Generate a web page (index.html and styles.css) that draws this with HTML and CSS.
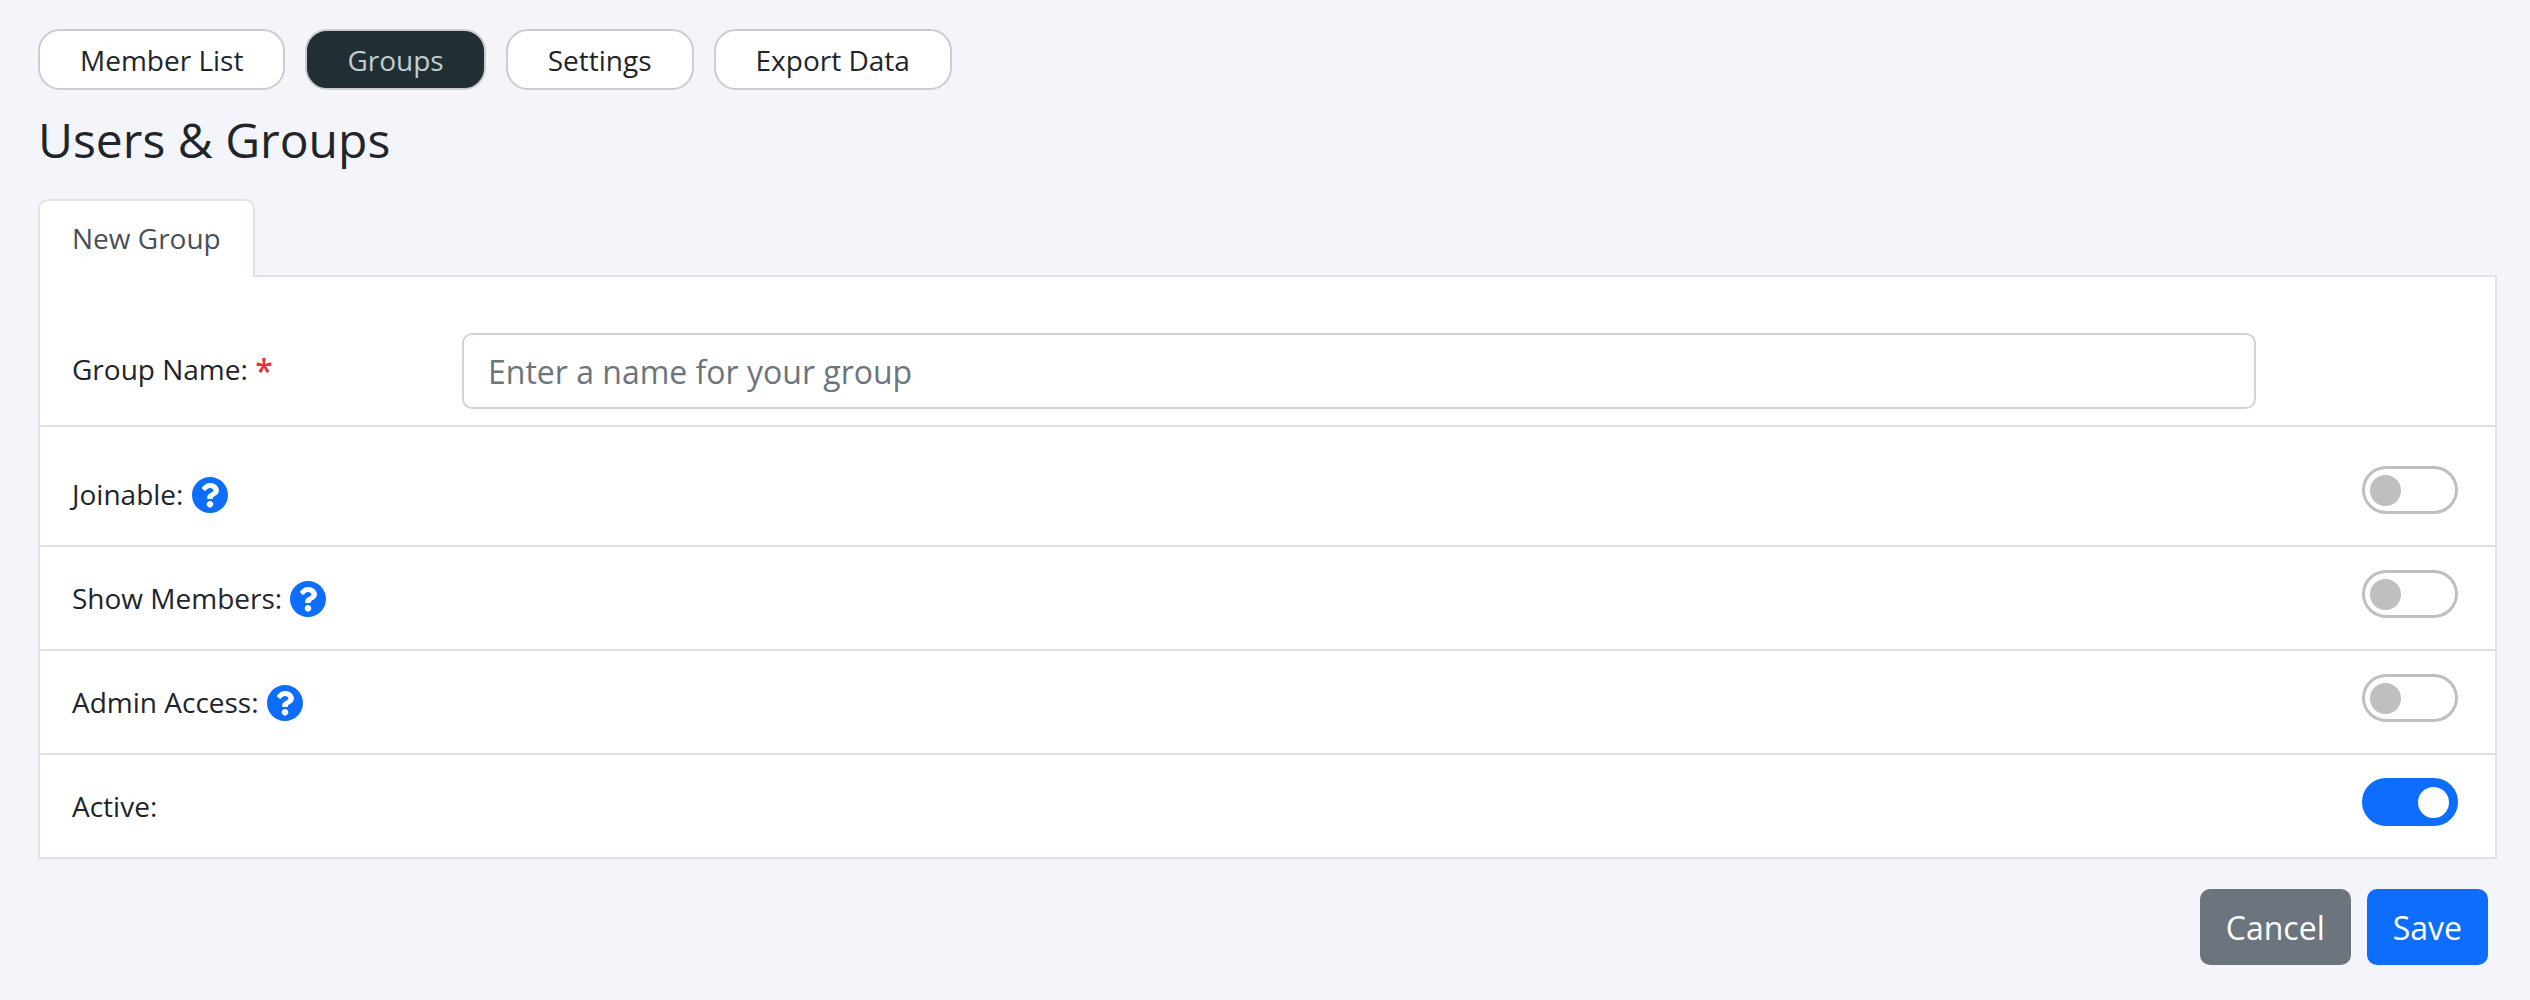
FILE: index.html
```html
<!DOCTYPE html>
<html lang="en">
<head>
<meta charset="utf-8">
<title>Users &amp; Groups</title>
<link rel="stylesheet" href="styles.css">
</head>
<body>
<svg class="defs" width="0" height="0" aria-hidden="true"><symbol id="q" viewBox="8 8 496 496"><path d="M504 256c0 136.997-111.043 248-248 248S8 392.997 8 256C8 119.083 119.043 8 256 8s248 111.083 248 248zM262.655 90c-54.497 0-89.255 22.957-116.549 63.758-3.536 5.286-2.353 12.415 2.715 16.258l34.699 26.31c5.205 3.947 12.621 3.008 16.665-2.122 17.864-22.658 30.113-35.797 57.303-35.797 20.429 0 45.698 13.148 45.698 32.958 0 14.976-12.363 22.667-32.534 33.976C247.128 238.528 216 254.941 216 296v4c0 6.627 5.373 12 12 12h56c6.627 0 12-5.373 12-12v-1.333c0-28.462 83.186-29.647 83.186-106.667 0-58.002-60.165-102-116.531-102zM256 338c-25.365 0-46 20.635-46 46 0 25.364 20.635 46 46 46s46-20.636 46-46c0-25.365-20.635-46-46-46z"/></symbol></svg>
<nav class="nav">
  <a class="pill">Member List</a>
  <a class="pill pill-active">Groups</a>
  <a class="pill">Settings</a>
  <a class="pill">Export Data</a>
</nav>
<h1 class="title">Users &amp; Groups</h1>
<div class="tabs"><div class="tab">New Group</div></div>
<section class="card">
  <div class="row row-name">
    <label class="label label-name">Group Name: <span class="req">*</span></label>
    <input class="input" type="text" placeholder="Enter a name for your group">
  </div>
  <div class="row row-first">
    <span class="label">Joinable: <svg class="help"><use href="#q"/></svg></span>
    <span class="switch"><i class="knob"></i></span>
  </div>
  <div class="row">
    <span class="label">Show Members: <svg class="help"><use href="#q"/></svg></span>
    <span class="switch"><i class="knob"></i></span>
  </div>
  <div class="row">
    <span class="label">Admin Access: <svg class="help"><use href="#q"/></svg></span>
    <span class="switch"><i class="knob"></i></span>
  </div>
  <div class="row row-last">
    <span class="label">Active:</span>
    <span class="switch switch-on"><i class="knob"></i></span>
  </div>
</section>
<div class="actions">
  <button class="btn btn-cancel">Cancel</button>
  <button class="btn btn-save">Save</button>
</div>
</body>
</html>
```
FILE: styles.css
```css
* { box-sizing: border-box; }
html, body { margin: 0; height: 100%; }
body {
  background: #f3f5fa;
  font-family: "Open Sans", "Noto Sans", sans-serif;
  color: #212529;
  padding: 29px 33px 0 38px;
  overflow: hidden;
}
.defs { position: absolute; }
.nav { display: flex; gap: 20px; }
.pill {
  display: flex; align-items: center; justify-content: center;
  height: 61px; padding: 0 40px;
  background: #fff; border: 2px solid #cccccf; border-radius: 22px;
  font-size: 28px; color: #212529;
}
.pill-active { background: #212e33; color: #bfcdd1; }
.title {
  margin: 23px 0 0; font-size: 48px; line-height: 54px; font-weight: 400; color: #212529;
}
.tabs { display: flex; margin-top: 32px; margin-bottom: -2px; position: relative; z-index: 1; }
.tab {
  display: flex; align-items: center;
  height: 78px; padding: 0 32px 2px;
  background: #fff; border: 2px solid #dee2e6; border-bottom: 0;
  border-radius: 10px 10px 0 0;
  font-size: 28px; color: #495057;
}
.card { background: #fff; border: 2px solid #dee2e6; }
.row {
  display: flex; align-items: center; justify-content: space-between;
  height: 104px; padding: 0 37px 0 32px;
  border-bottom: 2px solid #dee2e6;
}
.row-first { height: 120px; padding-top: 16px; }
.row-name { height: 150px; justify-content: flex-start; padding-top: 40px; }
.row-last { height: 102px; border-bottom: 0; }
.label { font-size: 28px; display: flex; align-items: center; gap: 1px; white-space: pre; }
.label-name { width: 390px; flex: none; margin-top: -4px; gap: 0; }
.req { color: #dc3545; font-size: 32px; line-height: 1; margin-top: 3px; font-weight: 600; }
.help { width: 36px; height: 36px; margin-top: 2px; fill: #0d6efd; }
.input {
  width: 1794px; height: 76px; padding: 0 24px;
  border: 2px solid #ced4da; border-radius: 10px; background: #fff;
  font: 400 32px "Open Sans", "Noto Sans", sans-serif; color: #212529;
}
.input::placeholder { color: #6c757d; opacity: 1; }
.switch {
  display: flex; align-items: center;
  width: 96px; height: 48px; padding: 0 5px; margin-top: -8px;
  border: 3.5px solid #bfbfbf; border-radius: 24px; background: #fff;
}
.knob { width: 31px; height: 31px; border-radius: 50%; background: #bfbfbf; }
.switch-on { background: #0d6efd; border-color: #0d6efd; justify-content: flex-end; padding-right: 6px; }
.switch-on .knob { background: #fff; }
.actions { display: flex; justify-content: flex-end; gap: 16px; margin: 30px 9px 0 0; }
.btn {
  height: 76px; padding: 0 26px; border: 0; border-radius: 10px;
  font: 400 32px "Open Sans", "Noto Sans", sans-serif; color: #fff;
}
.btn-cancel { background: #6c757d; }
.btn-save { background: #0d6efd; }
```
